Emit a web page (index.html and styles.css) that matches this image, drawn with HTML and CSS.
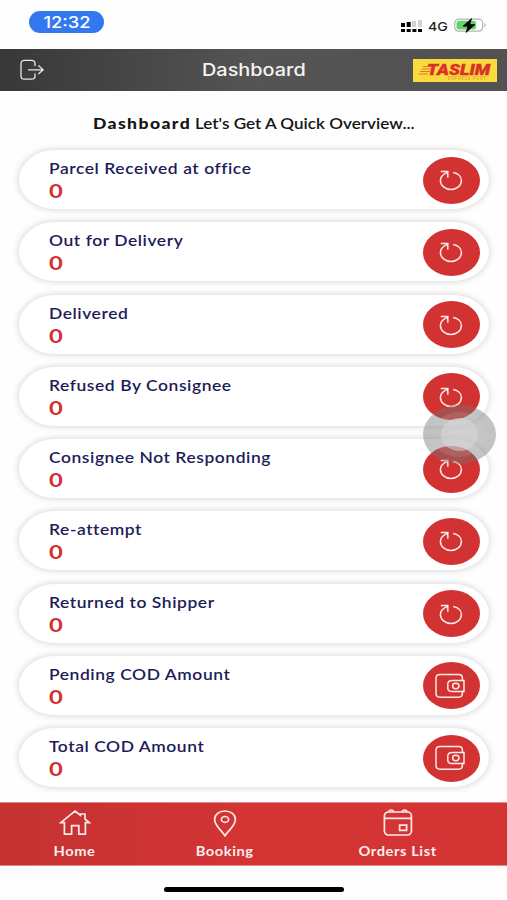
FILE: index.html
```html
<!DOCTYPE html>
<html lang="en">
<head>
    <meta charset="UTF-8">
    <meta name="viewport" content="width=device-width, initial-scale=1.0">
    <title>Dashboard</title>
    <link rel="stylesheet" href="styles.css">
</head>
<body>
    <!-- shared icons -->
    <svg class="icon-defs">
        <symbol id="refresh" viewBox="0 0 26 24">
            <path d="M15.2 4.6C20 5.4 23.4 8.5 23.4 12.6C23.4 17.6 18.8 21.4 13 21.4S2.4 17.6 2.4 12.6C2.4 9.6 4.2 6.6 9.4 4.4M2.8 3.6H9.8V9.8"/>
        </symbol>
        <symbol id="wallet" viewBox="0 0 30 26">
            <path d="M27.4 7.3V5Q27.4 1.4 23.4 1.4H5Q1 1.4 1 5V20.6Q1 24.2 5 24.2H23.4Q27.4 24.2 27.4 20.6V18.6M29 7.4H17.5Q12.8 7.4 12.8 11V15Q12.8 18.6 17.5 18.6H29ZM27.4 7.3Q29 7.3 29 9.5V16.5Q29 18.6 27.4 18.6"/>
            <ellipse cx="20.8" cy="13" rx="3.2" ry="2.7"/>
        </symbol>
    </svg>

    <div class="status-bar">
        <div class="time"><span>12:32</span></div>
        <div class="status-icons">
            <svg class="signal" width="21" height="13" viewBox="0 0 21 13">
                <path class="faint" d="M11 1h4v6h-4zM17 0h4v7h-4z"/>
                <path d="M0 3h4v4H0zM5.7 2h4v5h-4zM0 9h4v3H0zM5.7 9h4v3h-4zM11.4 9h4v3h-4zM17 9h4v3h-4z"/>
            </svg>
            <span class="network">4G</span>
            <svg class="battery" width="33" height="15" viewBox="0 0 33 15">
                <rect class="shell" x=".7" y="1.2" width="28" height="12" rx="4"/>
                <rect class="charge" x="2.5" y="2.8" width="19.5" height="8.8" rx="2.5"/>
                <path class="cap" d="M30.5 5q2.4 2.2 0 4.4z"/>
                <path class="bolt" d="M17.6.5L9 8.2h5L12 14.5L21 6.6H15.8Z"/>
            </svg>
        </div>
    </div>

    <header class="header">
        <svg class="logout" width="24" height="22" viewBox="0 0 24 22">
            <path d="M15 7V4.5Q15 1.4 11.5 1.4H4.5Q1 1.4 1 4.5V17Q1 20.2 4.5 20.2H11.5Q15 20.2 15 17V14.5M8 10.8H23M18.4 6.6L23.2 10.8L18.4 15"/>
        </svg>
        <h1><span>Dashboard</span></h1>
        <div class="logo">
            <svg class="logo-lines" width="15" height="12" viewBox="0 0 15 12">
                <path d="M5 1.5H14M3.5 4H13M2 6.5H12M.5 9H10"/>
            </svg>
            <span class="logo-name">TASLIM</span>
            <span class="logo-sub">EXPRESS POST</span>
        </div>
    </header>

    <p class="intro"><b>Dashboard</b> <span>Let's Get A Quick Overview...</span></p>

    <main class="cards">
        <div class="card">
            <div class="info"><span class="label">Parcel Received at office</span><span class="value">0</span></div>
            <div class="round"><svg class="refresh"><use href="#refresh"/></svg></div>
        </div>
        <div class="card">
            <div class="info"><span class="label">Out for Delivery</span><span class="value">0</span></div>
            <div class="round"><svg class="refresh"><use href="#refresh"/></svg></div>
        </div>
        <div class="card">
            <div class="info"><span class="label">Delivered</span><span class="value">0</span></div>
            <div class="round"><svg class="refresh"><use href="#refresh"/></svg></div>
        </div>
        <div class="card">
            <div class="info"><span class="label">Refused By Consignee</span><span class="value">0</span></div>
            <div class="round"><svg class="refresh"><use href="#refresh"/></svg></div>
        </div>
        <div class="card">
            <div class="info"><span class="label">Consignee Not Responding</span><span class="value">0</span></div>
            <div class="round"><svg class="refresh"><use href="#refresh"/></svg></div>
        </div>
        <div class="card">
            <div class="info"><span class="label">Re-attempt</span><span class="value">0</span></div>
            <div class="round"><svg class="refresh"><use href="#refresh"/></svg></div>
        </div>
        <div class="card">
            <div class="info"><span class="label">Returned to Shipper</span><span class="value">0</span></div>
            <div class="round"><svg class="refresh"><use href="#refresh"/></svg></div>
        </div>
        <div class="card">
            <div class="info"><span class="label">Pending COD Amount</span><span class="value">0</span></div>
            <div class="round"><svg class="wallet"><use href="#wallet"/></svg></div>
        </div>
        <div class="card">
            <div class="info"><span class="label">Total COD Amount</span><span class="value">0</span></div>
            <div class="round"><svg class="wallet"><use href="#wallet"/></svg></div>
        </div>
    </main>

    <nav class="tabs">
        <a class="tab home">
            <svg width="32" height="28" viewBox="0 0 32 28">
                <path d="M1.8 13.6L16 2L21.4 6.2V5H26V10L30.2 13.6H26.4V25.2H19.8V16.6H12.6V25.2H5.4V13.6Z"/>
            </svg>
            <span>Home</span>
        </a>
        <a class="tab booking">
            <svg width="32" height="28" viewBox="0 0 32 28">
                <path d="M16 26.8C13 22 5.6 16.5 5.6 10.4C5.6 5.5 10.2 2 16 2S26.4 5.5 26.4 10.4C26.4 16.5 19 22 16 26.8Z"/>
                <ellipse cx="16" cy="10.4" rx="3.6" ry="2.9"/>
            </svg>
            <span>Booking</span>
        </a>
        <a class="tab orders">
            <svg width="32" height="28" viewBox="0 0 32 28">
                <rect x="2.4" y="3" width="27" height="23" rx="4"/>
                <path d="M2.4 9.4H29.4M17.6 16.2H24.6V21.4H17.6ZM7 3Q7 1 9.2 1T11.4 3M20.4 3Q20.4 1 22.6 1T24.8 3"/>
            </svg>
            <span>Orders List</span>
        </a>
    </nav>
    <div class="home-indicator"></div>

    <!-- floating touch button -->
    <div class="touch"><div class="touch-mid"><div class="touch-inner"></div></div></div>
</body>
</html>
```

FILE: styles.css
```css
* {
    box-sizing: border-box;
}

body {
    margin: 0;
    height: 900px;
    overflow: hidden;
    display: flex;
    flex-direction: column;
    background-color: #fefefe;
    font-family: Lato, "Open Sans", sans-serif;
}

svg {
    display: block;
    fill: none;
    stroke: #fbe9e7;
    stroke-width: 1.5;
    flex-shrink: 0;
}

.icon-defs {
    position: absolute;
    width: 0;
    height: 0;
}

.status-bar {
    height: 49px;
    flex-shrink: 0;
    display: flex;
    justify-content: space-between;
    padding: 11px 20px 0 29px;
    font-family: Inter, sans-serif;
}

.time {
    width: 75px;
    height: 22px;
    border-radius: 11px;
    background-color: #3478f0;
    color: #fff;
    font-size: 15.5px;
    font-weight: 500;
    line-height: 23px;
    text-align: center;
}

.time span {
    display: inline-block;
    transform: scaleX(1.18);
}

.status-icons {
    display: flex;
    align-items: center;
    height: 15px;
    margin-top: 7px;
}

.signal {
    fill: #000;
    stroke: none;
    margin-top: 1px;
}

.signal .faint {
    fill: #d2d2d2;
}

.network {
    width: 20px;
    margin: 1px 6px 0 6px;
    color: #222;
    font-size: 12px;
    font-weight: 500;
    transform: scaleX(1.18);
    transform-origin: left;
}

.battery {
    stroke: none;
}

.battery .shell {
    stroke: #b4b4b4;
    stroke-width: 1.2;
}

.battery .charge {
    fill: #62d46c;
}

.battery .cap {
    fill: #aaa;
}

.battery .bolt {
    fill: #000;
    stroke: #000;
    stroke-width: 0.7;
}

.header {
    height: 42px;
    flex-shrink: 0;
    display: flex;
    align-items: center;
    justify-content: space-between;
    padding: 0 10px 0 20px;
    background: linear-gradient(to right, #383838, #545454 50%, #525252);
}

.logout {
    stroke: #e8e8e8;
    stroke-width: 1.3;
}

.header h1 {
    width: 104px;
    margin: 0 0 1px 51px;
    font-family: Inter, sans-serif;
    font-size: 17px;
    font-weight: 500;
    line-height: 22px;
    color: #f4f4f4;
}

.header h1 span {
    display: inline-block;
    transform: scaleX(1.17);
    transform-origin: left;
}

.logo {
    position: relative;
    width: 84px;
    height: 23px;
    background-color: #fadb3d;
    color: #d9302c;
}

.logo-lines {
    position: absolute;
    left: 5px;
    top: 6px;
    stroke: #e5752f;
    stroke-width: 1.1;
}

.logo-name {
    position: absolute;
    left: 14px;
    top: 7px;
    font: italic 900 14px/9px Roboto, sans-serif;
    -webkit-text-stroke: 0.4px #d9302c;
    transform: scaleX(1.29);
    transform-origin: left;
}

.logo-sub {
    position: absolute;
    left: 35px;
    top: 18px;
    font: 4.5px/4px Roboto, sans-serif;
    letter-spacing: 0.6px;
    color: #d99a35;
    white-space: nowrap;
}

.intro {
    display: flex;
    gap: 4px;
    margin: 22px 0 0 93px;
    font-size: 15px;
    line-height: 20px;
    color: #151515;
    white-space: nowrap;
}

.intro b {
    width: 98px;
    font-weight: 900;
    letter-spacing: 1.2px;
    transform: scaleX(1.17);
    transform-origin: left;
}

.intro span {
    font-weight: 600;
    transform: scaleX(1.14);
    transform-origin: left;
}

.cards {
    display: flex;
    flex-direction: column;
    gap: 13.25px;
    padding: 17px 18px 0 19px;
}

.card {
    display: flex;
    justify-content: space-between;
    align-items: center;
    height: 59px;
    padding: 1px 9px 0 30px;
    border-radius: 36px / 29.5px;
    background-color: #fff;
    box-shadow: 0 0 6px 1px rgba(0, 0, 0, 0.15);
}

.info {
    display: flex;
    flex-direction: column;
    margin-top: 2px;
    white-space: nowrap;
}

.label {
    font-size: 15.5px;
    font-weight: 600;
    line-height: 19px;
    letter-spacing: 0.5px;
    color: #211c59;
    transform: scaleX(1.125);
    transform-origin: left;
}

.value {
    font-size: 19px;
    font-weight: 700;
    line-height: 25px;
    color: #d0312f;
    transform: scaleX(1.25);
    transform-origin: left;
}

.round {
    display: flex;
    align-items: center;
    justify-content: center;
    width: 57px;
    height: 47px;
    border-radius: 50%;
    background-color: #d23332;
}

.refresh {
    width: 26px;
    height: 24px;
    margin-right: 1px;
}

.wallet {
    width: 30px;
    height: 26px;
    margin-right: 3px;
}

.tabs {
    display: grid;
    grid-template-columns: 150px 150px 196px;
    height: 64px;
    flex-shrink: 0;
    margin-top: 15px;
    border-top: 1px solid #e08a88;
    border-bottom: 1px solid #e08a88;
    background: linear-gradient(to right, #c53232, #d43434 50%);
}

.tab {
    display: flex;
    flex-direction: column;
    align-items: center;
    padding-top: 6px;
    color: #fdeeee;
    font-size: 13px;
    font-weight: 700;
    letter-spacing: 0.5px;
    line-height: 18px;
}

.tab svg {
    stroke-width: 1.7;
}

.tab span {
    margin-top: 5px;
    transform: scaleX(1.13);
}

.home-indicator {
    width: 180px;
    height: 5px;
    flex-shrink: 0;
    margin: 21px auto 0 164px;
    border-radius: 3px;
    background-color: #000;
}

.touch {
    position: absolute;
    left: 423px;
    top: 405px;
    width: 73px;
    height: 59px;
    padding: 7px 9px;
    border-radius: 50%;
    background-color: rgba(115, 115, 115, 0.42);
}

.touch-mid {
    height: 100%;
    padding: 6px 9px;
    border-radius: 50%;
    background-color: rgba(210, 210, 210, 0.15);
}

.touch-inner {
    height: 100%;
    border-radius: 50%;
    background-color: rgba(220, 220, 220, 0.5);
}
```
